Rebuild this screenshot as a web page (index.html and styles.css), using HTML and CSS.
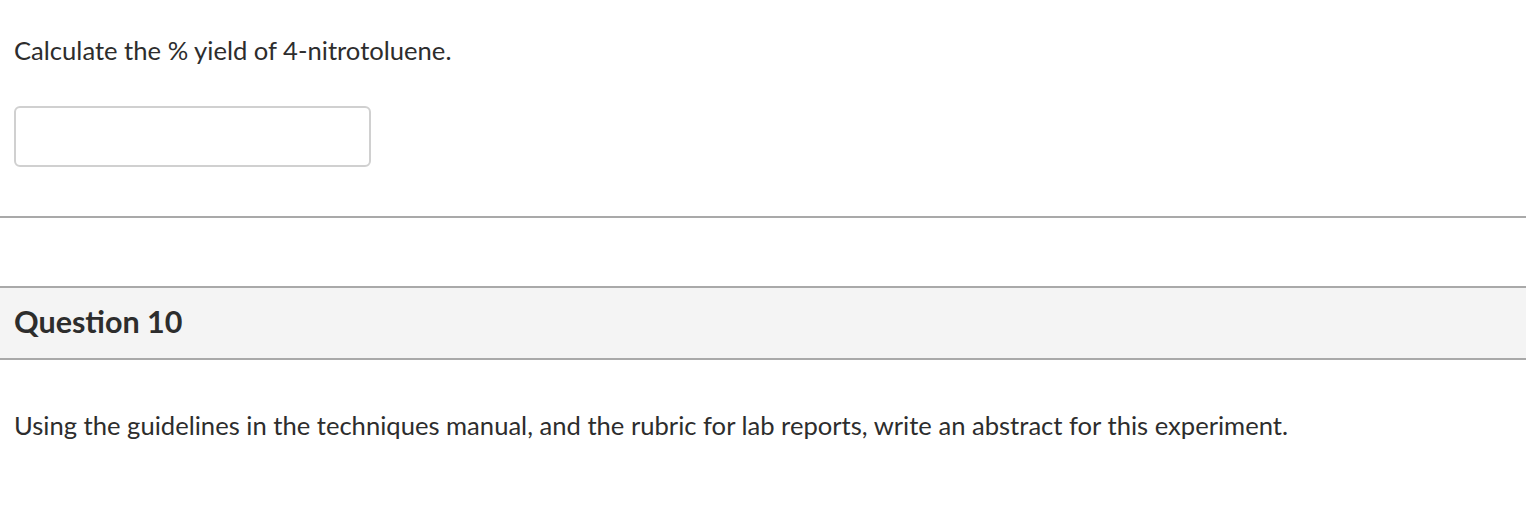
FILE: index.html
```html
<!DOCTYPE html>
<html lang="en">

<head>
    <meta charset="UTF-8">
    <meta name="viewport" content="width=device-width, initial-scale=1.0">
    <title>Quiz</title>
    <link rel="stylesheet" href="styles.css">
</head>

<body>
    <div class="question">
        <div class="question-body">
            <p class="question-text">Calculate the % yield of 4-nitrotoluene.</p>
            <input type="text" class="answer-input" aria-label="Answer">
        </div>
    </div>

    <div class="question">
        <div class="question-header">
            <h2>Question 10</h2>
        </div>
        <div class="question-body">
            <p class="question-text">Using the guidelines in the techniques manual, and the rubric for lab reports, write an abstract for this experiment.</p>
        </div>
    </div>
</body>

</html>
```

FILE: styles.css
```css
* {
    margin: 0;
    padding: 0;
    box-sizing: border-box;
}

body {
    font-family: Lato, 'Open Sans', sans-serif;
    color: #2d2d2d;
    background: white;
}

.question {
    border-bottom: 2px solid #a9a9a9;
    padding-bottom: 49px;
}

.question:last-child {
    border-bottom: none;
}

.question + .question {
    margin-top: 68px;
}

.question-body {
    padding: 32px 14px 0;
}

.question-text {
    font-size: 25.6px;
    line-height: 36px;
}

.answer-input {
    display: block;
    margin-top: 38px;
    width: 357px;
    height: 61px;
    border: 2px solid #d0d0d0;
    border-radius: 6px;
    background: white;
    font-family: inherit;
    font-size: 24px;
    padding: 0 12px;
}

.question-header {
    background: #f4f4f4;
    border-top: 2px solid #a9a9a9;
    border-bottom: 2px solid #a9a9a9;
    padding: 16px 14px 20px;
}

.question-header h2 {
    font-size: 30.5px;
    line-height: 34px;
    font-weight: 700;
    color: #2d2d2d;
}

.question-header + .question-body {
    padding-top: 47px;
}
```
